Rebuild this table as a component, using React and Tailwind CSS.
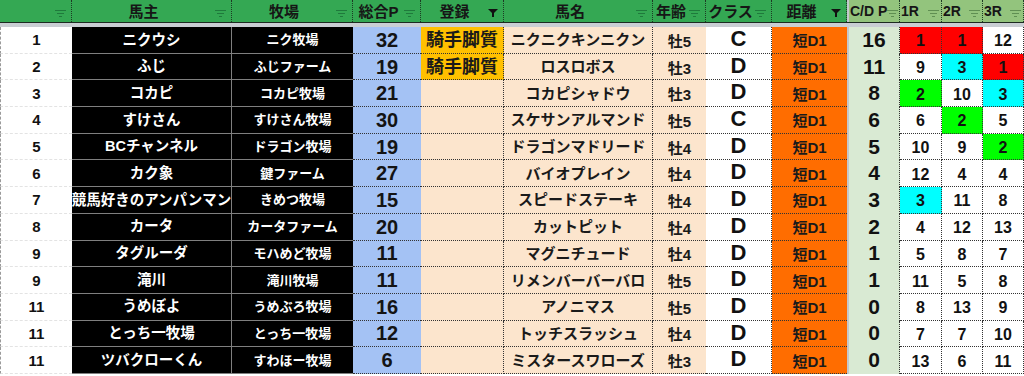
import React from "react";

const COLS =
  "grid grid-cols-[72px_160px_121px_68px_83px_149px_53px_66px_75px_2px_51px_42px_41px_41px]";

const rows = [
  { rank: 1, owner: "ニクウシ", farm: "ニク牧場", total: 32, reg: true, horse: "ニクニクキンニクン", age: "牡5", cls: "C", cd: 16, r: [1, 1, 12], c: ["red", "red", ""] },
  { rank: 2, owner: "ふじ", farm: "ふじファーム", total: 19, reg: true, horse: "ロスロボス", age: "牡3", cls: "D", cd: 11, r: [9, 3, 1], c: ["", "cyan", "red"] },
  { rank: 3, owner: "コカピ", farm: "コカピ牧場", total: 21, horse: "コカピシャドウ", age: "牡3", cls: "D", cd: 8, r: [2, 10, 3], c: ["green", "", "cyan"] },
  { rank: 4, owner: "すけさん", farm: "すけさん牧場", total: 30, horse: "スケサンアルマンド", age: "牡5", cls: "C", cd: 6, r: [6, 2, 5], c: ["", "green", ""] },
  { rank: 5, owner: "BCチャンネル", farm: "ドラゴン牧場", total: 19, horse: "ドラゴンマドリード", age: "牡4", cls: "D", cd: 5, r: [10, 9, 2], c: ["", "", "green"] },
  { rank: 6, owner: "カク象", farm: "鍵ファーム", total: 27, horse: "バイオプレイン", age: "牡4", cls: "D", cd: 4, r: [12, 4, 4], c: ["", "", ""] },
  { rank: 7, owner: "競馬好きのアンパンマン", farm: "きめつ牧場", total: 15, horse: "スピードステーキ", age: "牡4", cls: "D", cd: 3, r: [3, 11, 8], c: ["cyan", "", ""] },
  { rank: 8, owner: "カータ", farm: "カータファーム", total: 20, horse: "カットピット", age: "牡4", cls: "D", cd: 2, r: [4, 12, 13], c: ["", "", ""] },
  { rank: 9, owner: "タグルーダ", farm: "モハめど牧場", total: 11, horse: "マグニチュード", age: "牡4", cls: "D", cd: 1, r: [5, 8, 7], c: ["", "", ""] },
  { rank: 9, owner: "滝川", farm: "滝川牧場", total: 11, horse: "リメンバーバーバロ", age: "牡5", cls: "D", cd: 1, r: [11, 5, 8], c: ["", "", ""] },
  { rank: 11, owner: "うめぼよ", farm: "うめぶろ牧場", total: 16, horse: "アノニマス", age: "牡5", cls: "D", cd: 0, r: [8, 13, 9], c: ["", "", ""] },
  { rank: 11, owner: "とっち一牧場", farm: "とっち一牧場", total: 12, horse: "トッチスラッシュ", age: "牡4", cls: "D", cd: 0, r: [7, 7, 10], c: ["", "", ""] },
  { rank: 11, owner: "ツバクローくん", farm: "すわほー牧場", total: 6, horse: "ミスタースワローズ", age: "牡3", cls: "D", cd: 0, r: [13, 6, 11], c: ["", "", ""] },
];

const raceBg = {
  red: "bg-[#ff0000]",
  cyan: "bg-[#00ffff]",
  green: "bg-[#00ff00]",
  "": "bg-white",
};

const FilterIcon = ({ active, light }) =>
  active ? (
    <svg width="10" height="8" viewBox="0 0 10 8" className="shrink-0">
      <polygon points="0,0 10,0 6,4 6,8 4,8 4,4" fill="#111" />
    </svg>
  ) : (
    <svg width="11" height="7" viewBox="0 0 11 7" className="shrink-0">
      <g stroke={light ? "#5f8f52" : "#1f7a3c"} strokeWidth="1">
        <line x1="0" y1="0.5" x2="11" y2="0.5" />
        <line x1="2" y1="3.5" x2="9" y2="3.5" />
        <line x1="4" y1="6.5" x2="7" y2="6.5" />
      </g>
    </svg>
  );

const HeadCell = ({ label, active, light }) => (
  <div
    className={`flex items-center h-[22px] border-r border-dotted border-[#1d3a24] ${
      light ? "bg-[#93c47d]" : "bg-[#34a853]"
    }`}
  >
    {light ? (
      <span className="shrink-0 whitespace-nowrap pl-[1px] text-[14px] font-bold text-[#161616] leading-none">
        {label}
      </span>
    ) : (
      <span className="flex-1 whitespace-nowrap overflow-hidden text-center text-[15px] font-bold text-[#161616] leading-none">
        {label}
      </span>
    )}
    <span className={`${light ? "ml-auto mr-[2px]" : "mr-[5px]"} self-end mb-[5px] flex`}>
      <FilterIcon active={active} light={light} />
    </span>
  </div>
);

const cell = "flex items-center justify-center whitespace-nowrap overflow-hidden font-bold leading-none";

export default function App() {
  return (
    <div className="w-[1024px] h-[376px] overflow-hidden bg-white font-['Liberation_Sans','Noto_Sans_CJK_JP',sans-serif]">
      {/* header */}
      <div className={`${COLS} border-b border-[#1c2a20]`}>
        <HeadCell label="" />
        <HeadCell label="馬主" />
        <HeadCell label="牧場" />
        <HeadCell label="総合P" />
        <HeadCell label="登録" active />
        <HeadCell label="馬名" />
        <HeadCell label="年齢" />
        <HeadCell label="クラス" />
        <HeadCell label="距離" active />
        <div className="bg-[#c3c8cd]" />
        <HeadCell label="C/D P" light />
        <HeadCell label="1R" light />
        <HeadCell label="2R" light />
        <HeadCell label="3R" light />
      </div>
      <div className="h-[4px] bg-[#c9ced3]" />

      {/* body */}
      <div className={`${COLS} auto-rows-[26.7px]`}>
        {rows.map((row, i) => (
          <React.Fragment key={i}>
            <div className={`${cell} bg-white border-l border-dashed border-l-[#9a9a9a] border-b border-b-[#e3e3e3] text-[15px] text-[#111]`}>
              {row.rank}
            </div>
            <div className={`${cell} bg-black text-white text-[14.5px] border-b border-r border-[#7f7f7f]`}>
              {row.owner}
            </div>
            <div className={`${cell} bg-black text-white text-[13px] border-b border-[#7f7f7f]`}>
              {row.farm}
            </div>
            <div className={`${cell} bg-[#a4c2f4] text-[20px] text-[#141414] border-b border-dotted border-[#333]`}>
              {row.total}
            </div>
            <div
              className={`${cell} ${
                row.reg ? "bg-[#ffc000]" : "bg-[#fce5cd]"
              } text-[18px] text-[#1a1a1a] border-b border-r border-dotted border-[#333]`}
            >
              {row.reg ? "騎手脚質" : ""}
            </div>
            <div className={`${cell} bg-[#fce5cd] text-[15px] text-[#1a1a1a] border-b border-r border-dotted border-[#333]`}>
              {row.horse}
            </div>
            <div className={`${cell} bg-[#fce5cd] text-[15px] text-[#1a1a1a] border-b border-dotted border-[#333] pt-[3px]`}>
              {row.age}
            </div>
            <div className={`${cell} bg-white text-[22px] text-[#111] border-b border-r border-dotted border-[#333] items-start! pt-[1px]`}>
              {row.cls}
            </div>
            <div className={`${cell} bg-[#ff6d00] text-[15px] text-[#1a1a1a] border-b border-dotted border-[#333] pt-[2px]`}>
              短D1
            </div>
            <div className="bg-[#c3c8cd]" />
            <div className={`${cell} bg-[#d9ead3] text-[21px] text-[#111] border-r border-dotted border-[#333] pb-[2px]`}>
              {row.cd}
            </div>
            {row.r.map((v, j) => (
              <div
                key={j}
                className={`${cell} ${raceBg[row.c[j]]} text-[16px] text-[#111] border-b border-r border-dotted border-[#333] pt-[3px]`}
              >
                {v}
              </div>
            ))}
          </React.Fragment>
        ))}
      </div>
    </div>
  );
}
